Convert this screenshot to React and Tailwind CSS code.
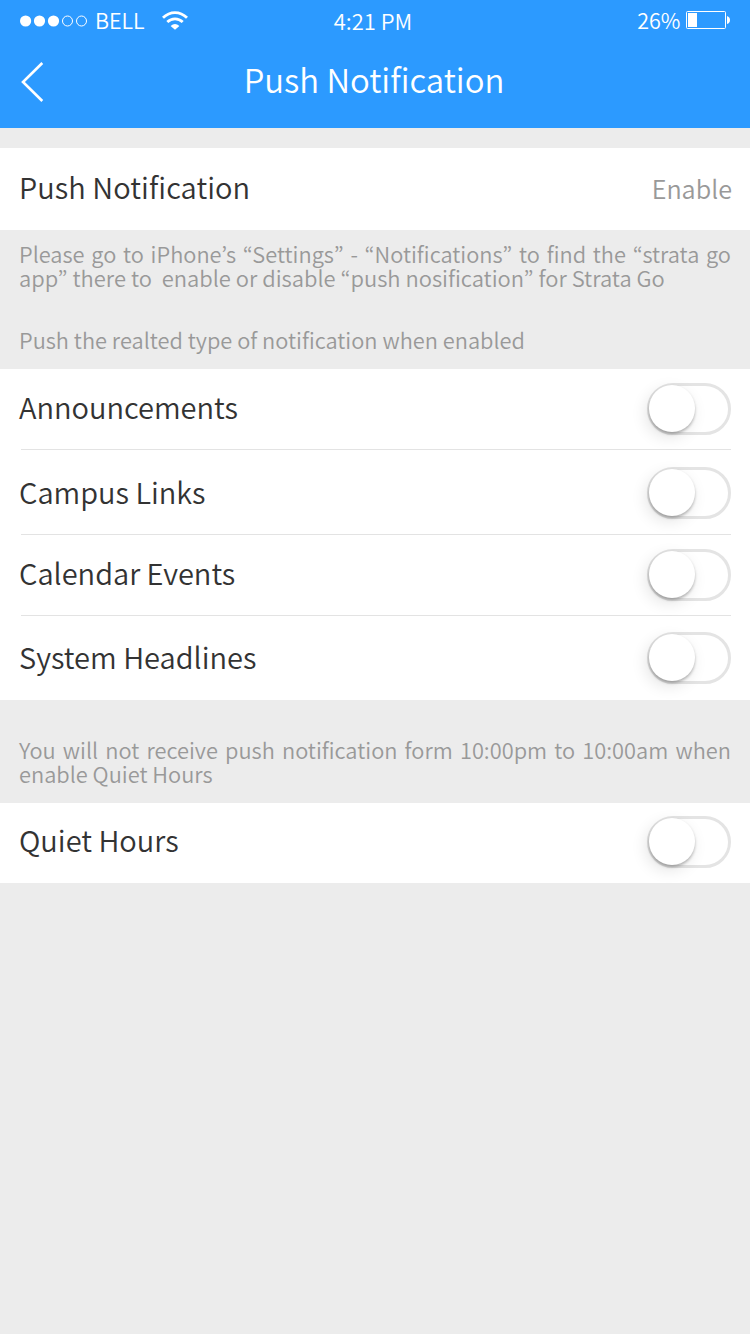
function Toggle({ className }) {
  return (
    <span role="switch" aria-checked="false" className={`relative block h-[52px] w-[84px] shrink-0 rounded-full border-[3px] border-[#e4e4e4] bg-white ${className}`}>
      <span className="absolute -top-px -left-px block h-[47px] w-[46px] rounded-full bg-white shadow-[0_2px_3px_rgba(0,0,0,0.26),-3px_5px_16px_rgba(0,0,0,0.11)]" />
    </span>
  );
}

function Row({ label, height, text, toggle, divider }) {
  return (
    <div className={`flex items-start pr-[19px] pl-[21px] ${height}`}>
      <div className={`flex h-full flex-1 items-start justify-between ${divider ? "shadow-[inset_0_-1px_0_#e3e3e3]" : ""}`}>
        <span className={`-ml-[2px] text-[29px] leading-[40px] text-[#333] ${text}`}>{label}</span>
        <Toggle className={toggle} />
      </div>
    </div>
  );
}

export default function App() {
  return (
    <div className="min-h-[1334px] w-[750px] bg-[#ececec] font-['Noto_Sans_CJK_KR_DemiLight','Noto_Sans_CJK_KR',sans-serif]">
      <header className="h-[128px] bg-[#2c9aff] text-white">
        <div className="grid h-[40px] grid-cols-3 text-[22px] leading-[40px]">
          <div className="flex h-[40px] items-center pl-5">
            <svg width="68" height="12" viewBox="0 0 68 12" fill="none" className="mt-px shrink-0">
              <circle cx="5.6" cy="6" r="5.6" fill="white" /><circle cx="19.5" cy="6" r="5.6" fill="white" /><circle cx="33.5" cy="6" r="5.6" fill="white" />
              <circle cx="47.5" cy="6" r="5" stroke="white" /><circle cx="61.5" cy="6" r="5" stroke="white" />
            </svg>
            <span className="ml-[7px] text-[21.5px]">BELL</span>
            <svg width="26" height="19" viewBox="0 0 26 19" fill="none" stroke="white" strokeWidth="2.8" className="ml-[17px]">
              <path d="M1 6.7C8-.2 18-.2 25 6.7M5.3 11C9.7 6.8 16.3 6.8 20.7 11" />
              <path d="M8.6 14.9Q13 11.1 17.4 14.9L13 18.8Z" fill="white" stroke="none" />
            </svg>
          </div>
          <div className="pr-[4px] text-center">4:21 PM</div>
          <div className="flex h-[40px] items-center justify-end pr-5">
            <span className="mr-[5.5px] text-[21.5px]">26%</span>
            <svg width="44" height="18" viewBox="0 0 44 18" fill="none">
              <rect x=".5" y=".5" width="39" height="17" rx="1" stroke="white" /><path d="M2 2H11V16H2Z" fill="white" />
              <path d="M41 5Q44 6 44 9T41 13Z" fill="white" />
            </svg>
          </div>
        </div>
        <div className="grid h-[88px] grid-cols-[60px_1fr_60px] items-start">
          <svg width="24" height="40" viewBox="0 0 24 40" fill="none" stroke="white" strokeWidth="2.6" className="mt-[22px] ml-5">
            <path d="M22.3 1L3 20L22.3 39" />
          </svg>
          <h1 className="pt-[14px] pr-[2px] text-center text-[32.9px] leading-[50px]">Push Notification</h1>
        </div>
      </header>
      <section className="mt-[20px] flex h-[82px] items-start justify-between bg-white pr-[18px] pl-[19px]">
        <span className="mt-[18px] text-[29px] leading-[40px] tracking-[0.08px] text-[#333]">Push Notification</span>
        <span className="mt-[20px] text-[25.2px] leading-[40px] text-[#999]">Enable</span>
      </section>
      <div className="h-[139px] px-[19px] pt-[12px] text-[21.8px] leading-[24px] text-[#999]">
        <p className="whitespace-nowrap [text-align-last:justify]">Please go to iPhone’s “Settings” - “Notifications” to find the “strata go</p>
        <p className="text-[21.95px] whitespace-pre">app” there to  enable or disable “push nosification” for Strata Go</p>
        <p className="mt-[38px]">Push the realted type of notification when enabled</p>
      </div>
      <section className="bg-white">
        <Row label="Announcements" height="h-[81px]" text="mt-[17px]" toggle="mt-[14px]" divider />
        <Row label="Campus Links" height="h-[85px]" text="mt-[21px]" toggle="mt-[17px]" divider />
        <Row label="Calendar Events" height="h-[81px]" text="mt-[17px]" toggle="mt-[14px]" divider />
        <Row label="System Headlines" height="h-[84px]" text="mt-[20px]" toggle="mt-[16px]" />
      </section>
      <div className="h-[103px] px-[19px] pt-[38px] text-[21.8px] leading-[24px] text-[#999]">
        <p className="whitespace-nowrap [text-align-last:justify]">You will not receive push notification form 10:00pm to 10:00am when</p>
        <p>enable Quiet Hours</p>
      </div>
      <section className="bg-white">
        <Row label="Quiet Hours" height="h-[80px]" text="mt-[16px]" toggle="mt-[13px]" />
      </section>
    </div>
  );
}
